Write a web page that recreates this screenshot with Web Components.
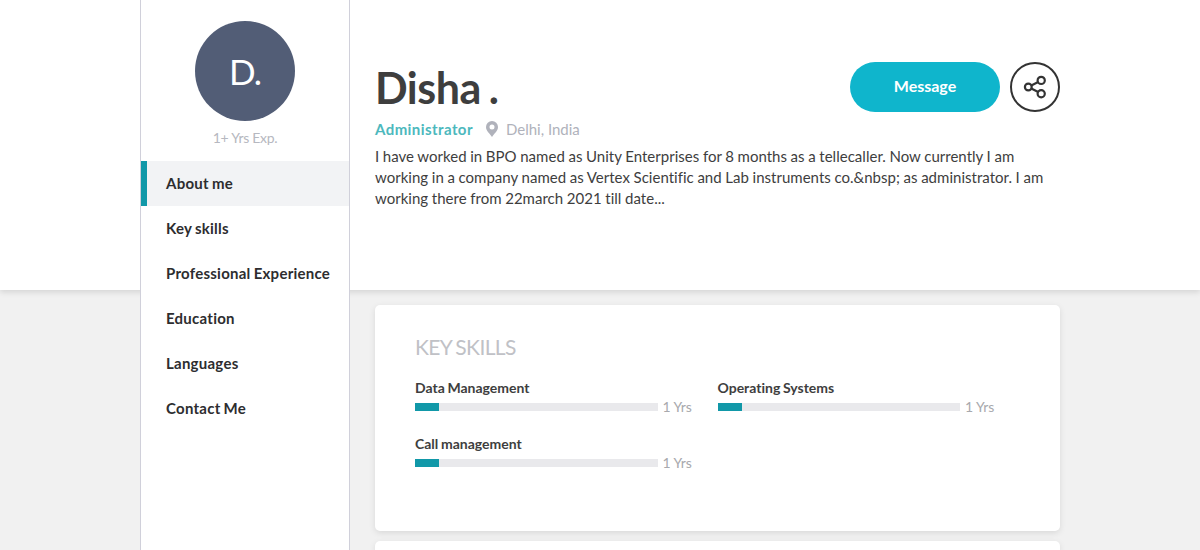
<!DOCTYPE html>
<html lang="en">
<head>
  <meta charset="utf-8">
  <title>Disha . | Administrator</title>
  <style>
    body {
      margin: 0;
      height: 550px;
      overflow: hidden;
      background-color: #f1f1f1;
      color: #3e3e3e;
      font-family: Lato, 'Liberation Sans', sans-serif;
      font-variant-ligatures: none;
    }
  </style>
</head>
<body>
  <profile-page>
    <profile-sidebar slot="sidebar" initials="D." experience="1+ Yrs Exp.">
      <nav-item active>About me</nav-item>
      <nav-item>Key skills</nav-item>
      <nav-item>Professional Experience</nav-item>
      <nav-item>Education</nav-item>
      <nav-item>Languages</nav-item>
      <nav-item>Contact Me</nav-item>
    </profile-sidebar>

    <profile-header slot="header">
      <span slot="name">Disha .</span>
      <span slot="role">Administrator</span>
      <span slot="location">Delhi, India</span>
      I have worked in BPO named as Unity Enterprises for 8 months as a tellecaller. Now currently I am working in a company named as Vertex Scientific and Lab instruments co.&amp;nbsp; as administrator. I am working there from 22march 2021 till date...
    </profile-header>

    <profile-card heading="KEY SKILLS">
      <skill-meter name="Data Management" years="1"></skill-meter>
      <skill-meter name="Operating Systems" years="1"></skill-meter>
      <skill-meter name="Call management" years="1"></skill-meter>
    </profile-card>
    <profile-card></profile-card>
  </profile-page>

  <script>
    class ProfilePage extends HTMLElement {
      connectedCallback() {
        const shadowRoot = this.attachShadow({ mode: 'open' });

        shadowRoot.innerHTML = `
          <style>
            :host {
              display: grid;
              grid-template-columns: 1fr 210px 685px 1fr;
              grid-template-rows: 290px 1fr;
              column-gap: 25px;
              width: 1200px;
              height: 550px;
              margin: 0 auto;
            }

            .band {
              grid-area: 1 / 1 / 2 / -1;
              background-color: #fff;
              box-shadow: 0 2px 6px rgba(0, 0, 0, 0.13);
            }

            .sidebar {
              grid-area: 1 / 2 / -1 / 3;
              display: grid;
            }

            .header {
              grid-area: 1 / 3 / 2 / 4;
            }

            .cards {
              grid-area: 2 / 3 / 3 / 4;
              display: flex;
              flex-direction: column;
              gap: 10px;
              padding-top: 15px;
              min-height: 0;
            }
          </style>
          <div class="band"></div>
          <div class="sidebar"><slot name="sidebar"></slot></div>
          <div class="header"><slot name="header"></slot></div>
          <div class="cards"><slot></slot></div>`;
      }
    }
    window.customElements.define('profile-page', ProfilePage);

    class ProfileSidebar extends HTMLElement {
      connectedCallback() {
        const shadowRoot = this.attachShadow({ mode: 'open' });

        shadowRoot.innerHTML = `
          <style>
            :host {
              display: flex;
              flex-direction: column;
              align-items: stretch;
              box-sizing: border-box;
              background-color: #fff;
              border: solid #d0d0da;
              border-width: 0 1px;
              padding-top: 21px;
            }

            .avatar {
              display: flex;
              align-items: center;
              justify-content: center;
              align-self: center;
              width: 100px;
              height: 100px;
              border-radius: 50%;
              background-color: #525d76;
              color: #fff;
              font-size: 35px;
              letter-spacing: -1px;
              line-height: 100px;
            }

            .experience {
              height: 40px;
              color: #b6b8c0;
              font-size: 14px;
              letter-spacing: -0.3px;
              line-height: 34px;
              text-align: center;
            }
          </style>
          <div class="avatar">${this.getAttribute('initials')}</div>
          <div class="experience">${this.getAttribute('experience')}</div>
          <slot></slot>`;
      }
    }
    window.customElements.define('profile-sidebar', ProfileSidebar);

    class NavItem extends HTMLElement {
      connectedCallback() {
        const shadowRoot = this.attachShadow({ mode: 'open' });

        shadowRoot.innerHTML = `
          <style>
            :host {
              display: block;
              box-sizing: border-box;
              height: 45px;
              border-left: 6px solid transparent;
              padding-left: 19px;
              color: #2d2d2f;
              font-size: 15px;
              font-weight: 700;
              letter-spacing: 0.25px;
              line-height: 45px;
              white-space: nowrap;
              word-spacing: -0.8px;
            }

            :host([active]) {
              border-left-color: #1198a8;
              background-color: #f2f3f5;
            }
          </style>
          <slot></slot>`;
      }
    }
    window.customElements.define('nav-item', NavItem);

    class ProfileHeader extends HTMLElement {
      connectedCallback() {
        const shadowRoot = this.attachShadow({ mode: 'open' });

        shadowRoot.innerHTML = `
          <style>
            :host {
              display: block;
              padding-top: 62px;
            }

            .top {
              display: flex;
              justify-content: space-between;
              height: 57px;
            }

            h1 {
              margin: 0;
              font-size: 43px;
              font-weight: 700;
              letter-spacing: -0.5px;
              line-height: 52px;
              word-spacing: -2px;
            }

            .actions {
              display: flex;
              gap: 10px;
            }

            .meta {
              display: flex;
              align-items: center;
              height: 21px;
              font-size: 15px;
              line-height: 21px;
            }

            .role {
              color: #4cb8bd;
              font-weight: 700;
              letter-spacing: 0.43px;
            }

            .pin {
              margin: 0 8px 2px 13px;
            }

            .location {
              color: #b0b2bb;
            }

            p {
              margin: 6px 0 0;
              font-size: 15px;
              letter-spacing: 0.02px;
              line-height: 21px;
              word-spacing: -0.25px;
            }
          </style>
          <div class="top">
            <h1><slot name="name"></slot></h1>
            <div class="actions">
              <message-button>Message</message-button>
              <share-button></share-button>
            </div>
          </div>
          <div class="meta">
            <span class="role"><slot name="role"></slot></span>
            <svg class="pin" width="12" height="16" viewBox="0 0 12 16" aria-hidden="true">
              <path fill="#b0b2bb" fill-rule="evenodd" d="M6 0a6 6 0 0 0-6 6c0 3.8 3.8 6.6 6 10 2.200-3.400 6-6.200 6-10a6 6 0 0 0-6-6zm0 3.400a2.500 2.500 0 1 1 0 5 2.500 2.500 0 0 1 0-5z"/>
            </svg>
            <span class="location"><slot name="location"></slot></span>
          </div>
          <p><slot></slot></p>`;
      }
    }
    window.customElements.define('profile-header', ProfileHeader);

    class MessageButton extends HTMLElement {
      connectedCallback() {
        const shadowRoot = this.attachShadow({ mode: 'open' });

        shadowRoot.innerHTML = `
          <style>
            button {
              display: block;
              width: 150px;
              height: 50px;
              padding: 0 0 2px;
              border: none;
              border-radius: 25px;
              background-color: #0fb5cc;
              color: #fff;
              cursor: pointer;
              font: 700 16px/48px Lato, sans-serif;
            }
          </style>
          <button type="button"><slot></slot></button>`;
      }
    }
    window.customElements.define('message-button', MessageButton);

    class ShareButton extends HTMLElement {
      connectedCallback() {
        const shadowRoot = this.attachShadow({ mode: 'open' });

        shadowRoot.innerHTML = `
          <style>
            button {
              display: flex;
              align-items: center;
              justify-content: center;
              box-sizing: border-box;
              width: 50px;
              height: 50px;
              padding: 0;
              border: 2px solid #333;
              border-radius: 50%;
              background: transparent;
              cursor: pointer;
            }
          </style>
          <button type="button" aria-label="Share">
            <svg width="24" height="24" viewBox="0 0 24 24" fill="none" stroke="#333" stroke-width="2.200">
              <circle cx="5.300" cy="12" r="3.400"/>
              <circle cx="18.200" cy="5.400" r="3.600"/>
              <circle cx="18.200" cy="18.700" r="3.600"/>
              <path d="M8.300 10.500l6.900-3.500M8.300 13.500l6.900 3.500"/>
            </svg>
          </button>`;
      }
    }
    window.customElements.define('share-button', ShareButton);

    class ProfileCard extends HTMLElement {
      connectedCallback() {
        const shadowRoot = this.attachShadow({ mode: 'open' });
        const heading = this.getAttribute('heading');

        shadowRoot.innerHTML = `
          <style>
            :host {
              display: block;
              flex: 1;
              border-radius: 5px 5px 0 0;
              background-color: #fff;
              box-shadow: 0 2px 6px rgba(0, 0, 0, 0.1);
            }

            :host([heading]) {
              flex: none;
              box-sizing: border-box;
              height: 226px;
              padding: 29px 40px;
              border-radius: 5px;
            }

            h2 {
              margin: 0 0 18px;
              color: #c0c1c6;
              font-size: 21px;
              font-weight: 400;
              letter-spacing: -0.6px;
              line-height: 26px;
              word-spacing: -1px;
            }

            .list {
              display: grid;
              grid-template-columns: 1fr 1fr;
            }
          </style>
          ${heading ? `<h2>${heading}</h2>` : ''}
          <div class="list"><slot></slot></div>`;
      }
    }
    window.customElements.define('profile-card', ProfileCard);

    class SkillMeter extends HTMLElement {
      connectedCallback() {
        const shadowRoot = this.attachShadow({ mode: 'open' });
        const years = Number(this.getAttribute('years'));

        shadowRoot.innerHTML = `
          <style>
            :host {
              display: block;
              height: 56px;
            }

            .name {
              font-size: 14px;
              font-weight: 700;
              line-height: 20px;
              word-spacing: -0.8px;
            }

            .row {
              display: flex;
              align-items: center;
              gap: 5px;
              height: 18px;
            }

            .track {
              width: 80.2%;
              height: 8px;
              background-color: #e9e9ec;
            }

            .fill {
              width: ${years * 10}%;
              height: 100%;
              background-color: #1198a8;
            }

            .years {
              color: #a8a9ad;
              font-size: 14px;
              letter-spacing: -0.15px;
              line-height: 18px;
            }
          </style>
          <div class="name">${this.getAttribute('name')}</div>
          <div class="row">
            <div class="track"><div class="fill"></div></div>
            <span class="years">${years} Yrs</span>
          </div>`;
      }
    }
    window.customElements.define('skill-meter', SkillMeter);
  </script>
</body>
</html>
